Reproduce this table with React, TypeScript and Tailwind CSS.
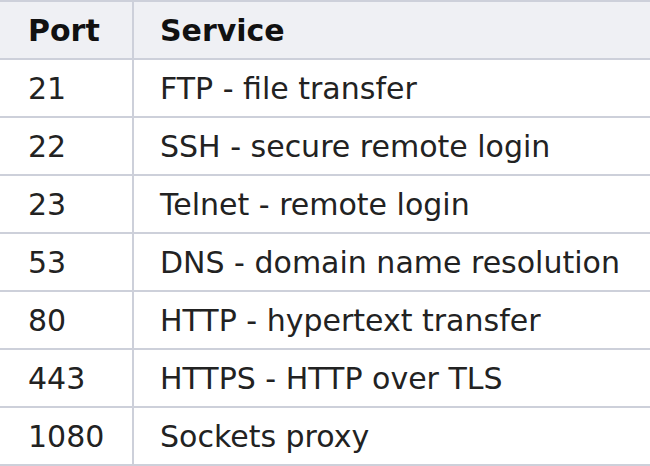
import React from 'react'

const rows: [string, string][] = [
  ['21', 'FTP - file transfer'],
  ['22', 'SSH - secure remote login'],
  ['23', 'Telnet - remote login'],
  ['53', 'DNS - domain name resolution'],
  ['80', 'HTTP - hypertext transfer'],
  ['443', 'HTTPS - HTTP over TLS'],
  ['1080', 'Sockets proxy'],
]

export default function App() {
  return (
    <div
      className="w-[650px] h-[466px] overflow-hidden bg-white text-[30px] text-[#222]"
      style={{ fontFamily: '"DejaVu Sans", sans-serif' }}
    >
      <div className="w-[680px] border-t-2 border-[#cdd0da]">
        <div className="flex h-[58px] border-b-2 border-[#cdd0da] bg-[#eff0f4] font-bold text-[#111]">
          <div className="w-[134px] shrink-0 border-r-2 border-[#cdd0da] pl-[28px] pt-[1px] flex items-center">
            Port
          </div>
          <div className="flex-1 pl-[26px] pt-[1px] flex items-center">Service</div>
        </div>
        {rows.map(([port, service]) => (
          <div key={port} className="flex h-[58px] border-b-2 border-[#cdd0da]">
            <div className="w-[134px] shrink-0 border-r-2 border-[#cdd0da] pl-[28px] pt-[1px] flex items-center">
              {port}
            </div>
            <div className="flex-1 pl-[26px] pt-[1px] flex items-center whitespace-nowrap">
              {service}
            </div>
          </div>
        ))}
      </div>
    </div>
  )
}
